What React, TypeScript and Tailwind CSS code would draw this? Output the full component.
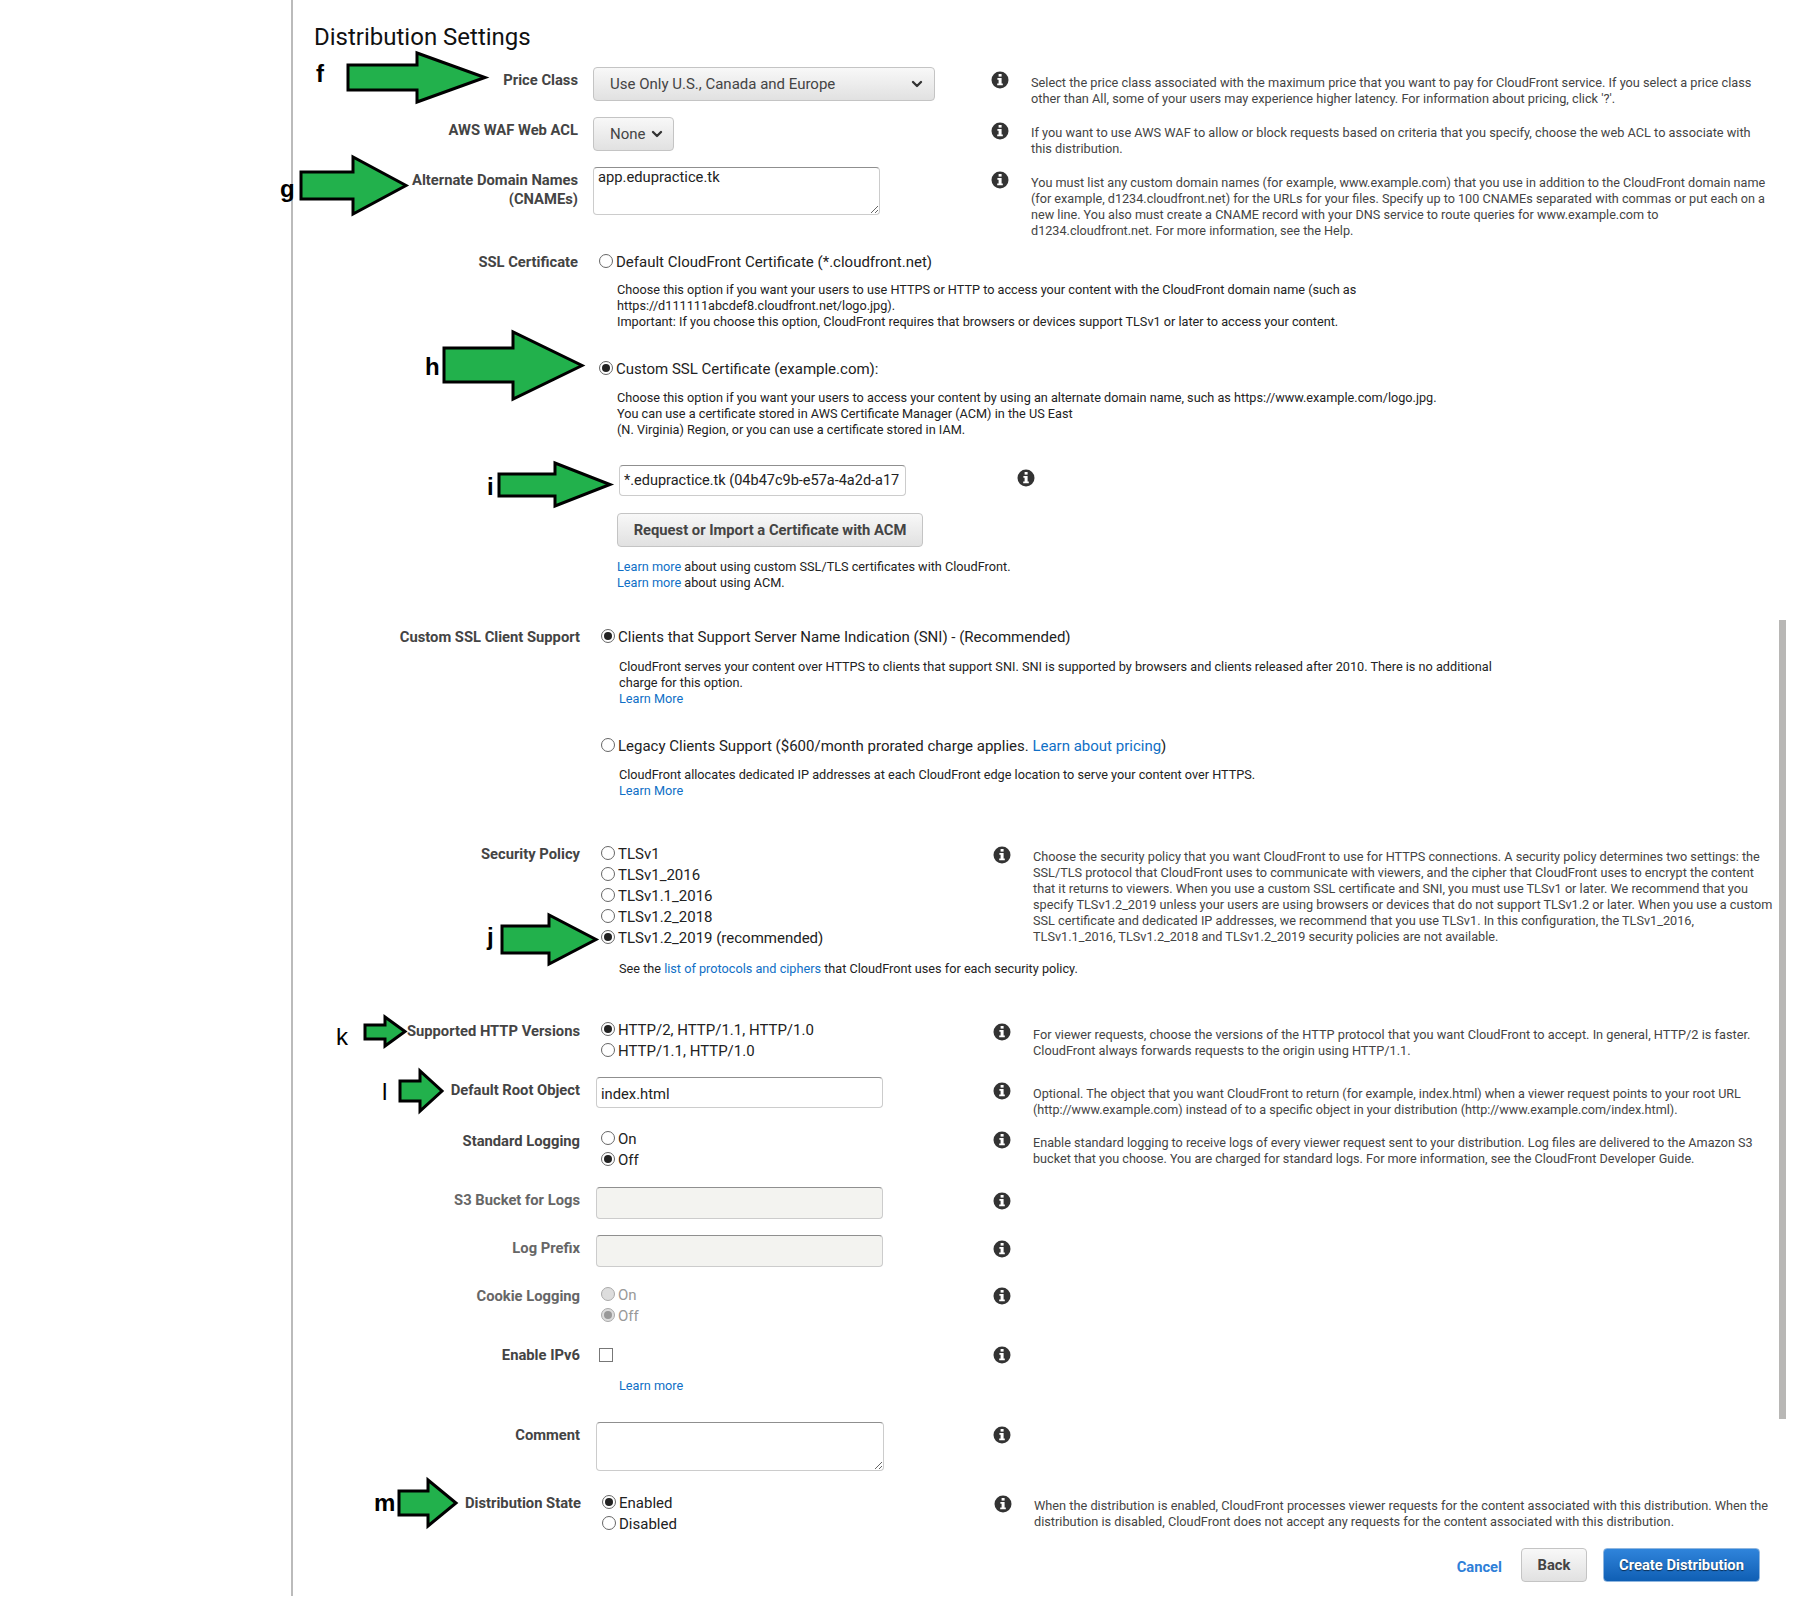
import type { ReactNode } from 'react';
import { ChevronDown } from 'lucide-react';

const FONT = "font-['Roboto','Liberation_Sans',sans-serif]";

// Annotation arrows: tail left, shaft top/bottom, head base x, head top/bottom, tip
const ARROWS = [
  [348, 65, 90, 417, 53, 102, 485],
  [301, 172, 199, 353, 157, 214, 406],
  [444, 348, 382, 513, 332, 399, 582],
  [499, 474, 496, 555, 463, 506, 610],
  [502, 926, 953, 549, 915, 964, 596],
  [365, 1025, 1039, 385, 1017, 1046, 405],
  [400, 1081, 1101, 420, 1071, 1111, 442],
  [399, 1491, 1515, 428, 1480, 1526, 456],
];

function InfoIcon({ className = '' }: { className?: string }) {
  return (
    <svg viewBox="0 0 18 18" className={`h-[18px] w-[18px] ${className}`}>
      <circle cx="9" cy="9" r="8.5" fill="#333" />
      <rect x="7.6" y="3" width="3" height="2.6" fill="#fff" />
      <path d="M6.4 7h4.2v5.4h1.2v1.8H6.2v-1.8h1.4V8.8H6.4z" fill="#fff" />
    </svg>
  );
}

function Radio({ checked = false, disabled = false }: { checked?: boolean; disabled?: boolean }) {
  return (
    <span
      className={`mt-[-3px] mr-[3px] flex h-[14px] w-[14px] shrink-0 items-center justify-center rounded-full border ${
        disabled ? 'border-[#aaa] bg-[#ddd]' : 'border-[#666] bg-white'
      }`}
    >
      {checked && (
        <span className={`h-[8px] w-[8px] rounded-full ${disabled ? 'bg-[#999]' : 'bg-[#222]'}`} />
      )}
    </span>
  );
}

function RadioLine({
  children,
  checked,
  disabled,
}: {
  children: ReactNode;
  checked?: boolean;
  disabled?: boolean;
}) {
  return (
    <label
      className={`flex h-[21px] items-center pt-[3px] pl-[6px] text-[15px] ${disabled ? 'text-[#999]' : 'text-[#222]'}`}
    >
      <Radio checked={checked} disabled={disabled} />
      <span className="mt-px">{children}</span>
    </label>
  );
}

function LearnMore({ children = 'Learn more' }: { children?: ReactNode }) {
  return (
    <a href="#" className="text-[#0f6fc6]">
      {children}
    </a>
  );
}

function Note({ className = '', children }: { className?: string; children: ReactNode }) {
  return <p className={`ml-[24px] text-[12.7px] leading-[16px] text-[#222] ${className}`}>{children}</p>;
}

interface RowProps {
  label: ReactNode;
  muted?: boolean;
  className: string;
  labelClass?: string;
  infoClass?: string;
  helpClass?: string;
  help?: ReactNode;
  wide?: boolean;
  children: ReactNode;
}

function Row({ label, muted, className, labelClass = '', infoClass, helpClass = '', help, wide, children }: RowProps) {
  return (
    <div
      className={`grid ${wide ? 'grid-cols-[285px_1fr]' : 'grid-cols-[285px_413px_40px_1fr]'} ${className}`}
    >
      <div
        className={`text-right text-[14.75px] leading-[19px] font-bold whitespace-nowrap ${muted ? 'text-[#666]' : 'text-[#444]'} ${labelClass}`}
      >
        {label}
      </div>
      <div className="pl-[15px]">{children}</div>
      {!wide && (
        <div className={infoClass}>
          <InfoIcon />
        </div>
      )}
      {!wide && <div className={`text-[12.75px] leading-[16px] whitespace-nowrap text-[#444] ${helpClass}`}>{help}</div>}
    </div>
  );
}

const inputClass =
  'block rounded-[4px] border border-[#ccc] border-t-[#8f8f8f] bg-white px-[4px] text-[14.75px] text-[#222] outline-none';

const greyButton =
  'rounded-[4px] border border-[#c4c4c4] bg-gradient-to-b from-[#f8f8f8] to-[#e1e1e1] text-[#444]';

export default function App() {
  return (
    <div className={`relative h-[1608px] w-[1800px] overflow-hidden bg-white ${FONT}`}>
      <div className="ml-[291px] h-[1596px] border-l-2 border-[#bbb]">
        <h1 className="h-[67px] pt-[23px] pl-[21px] text-[24px] leading-[28px] font-normal text-[#111]">
          Distribution Settings
        </h1>

        <Row
          label="Price Class"
          className="h-[50px]"
          labelClass="pt-[4px]"
          infoClass="pt-[4px]"
          helpClass="pt-[8px]"
          help={
            <>
              Select the price class associated with the maximum price that you want to pay for CloudFront service. If you select a price class
              <br />
              other than All, some of your users may experience higher latency. For information about pricing, click &apos;?&apos;.
            </>
          }
        >
          <button className={`flex h-[34px] w-[342px] items-center justify-between pr-[9px] pl-[16px] text-[15px] ${greyButton}`}>
            Use Only U.S., Canada and Europe
            <ChevronDown className="h-[16px] w-[16px]" strokeWidth={3.5} color="#333" />
          </button>
        </Row>

        <Row
          label="AWS WAF Web ACL"
          className="h-[50px]"
          labelClass="pt-[4px]"
          infoClass="pt-[5px]"
          helpClass="pt-[8px]"
          help={
            <>
              If you want to use AWS WAF to allow or block requests based on criteria that you specify, choose the web ACL to associate with
              <br />
              this distribution.
            </>
          }
        >
          <button className={`flex h-[34px] w-[81px] items-center gap-[3px] pl-[16px] text-[15px] ${greyButton}`}>
            None
            <ChevronDown className="h-[16px] w-[16px]" strokeWidth={3.5} color="#333" />
          </button>
        </Row>

        <Row
          label={
            <>
              Alternate Domain Names
              <br />
              (CNAMEs)
            </>
          }
          className="h-[83px]"
          labelClass="pt-[4px]"
          infoClass="pt-[4px]"
          helpClass="pt-[8px] !text-[12.65px]"
          help={
            <>
              You must list any custom domain names (for example, www.example.com) that you use in addition to the CloudFront domain name
              <br />
              (for example, d1234.cloudfront.net) for the URLs for your files. Specify up to 100 CNAMEs separated with commas or put each on a
              <br />
              new line. You also must create a CNAME record with your DNS service to route queries for www.example.com to
              <br />
              d1234.cloudfront.net. For more information, see the Help.
            </>
          }
        >
          <textarea readOnly defaultValue="app.edupractice.tk" className={`${inputClass} h-[48px] w-[287px] leading-[18px]`} />
        </Row>

        <Row wide label="SSL Certificate" className="h-[375px]" labelClass="pt-[3px]">
          <RadioLine>Default CloudFront Certificate (*.cloudfront.net)</RadioLine>
          <Note className="mt-[11px]">
            Choose this option if you want your users to use HTTPS or HTTP to access your content with the CloudFront domain name (such as
            <br />
            https://d111111abcdef8.cloudfront.net/logo.jpg).
            <br />
            Important: If you choose this option, CloudFront requires that browsers or devices support TLSv1 or later to access your content.
          </Note>
          <div className="mt-[27px]">
            <RadioLine checked>Custom SSL Certificate (example.com):</RadioLine>
          </div>
          <Note className="mt-[12px]">
            Choose this option if you want your users to access your content by using an alternate domain name, such as https://www.example.com/logo.jpg.
            <br />
            You can use a certificate stored in AWS Certificate Manager (ACM) in the US East
            <br />
            (N. Virginia) Region, or you can use a certificate stored in IAM.
          </Note>
          <div className="mt-[27px] ml-[26px] flex gap-[111px]">
            <input readOnly value="*.edupractice.tk (04b47c9b-e57a-4a2d-a17" className={`${inputClass} h-[31px] w-[287px] !text-[14.5px]`} />
            <InfoIcon className="mt-[4px]" />
          </div>
          <button className={`mt-[17px] ml-[24px] block h-[34px] w-[306px] text-[14.75px] font-bold ${greyButton}`}>
            Request or Import a Certificate with ACM
          </button>
          <Note className="mt-[12px]">
            <LearnMore /> about using custom SSL/TLS certificates with CloudFront.
            <br />
            <LearnMore /> about using ACM.
          </Note>
        </Row>

        <div className="pl-[2px]">
          <Row wide label="Custom SSL Client Support" className="h-[217px]" labelClass="pt-[3px]">
            <RadioLine checked>Clients that Support Server Name Indication (SNI) - (Recommended)</RadioLine>
            <Note className="mt-[13px]">
              CloudFront serves your content over HTTPS to clients that support SNI. SNI is supported by browsers and clients released after 2010. There is no additional
              <br />
              charge for this option.
              <br />
              <LearnMore>Learn More</LearnMore>
            </Note>
            <div className="mt-[27px]">
              <RadioLine>
                Legacy Clients Support ($600/month prorated charge applies. <LearnMore>Learn about pricing</LearnMore>)
              </RadioLine>
            </div>
            <Note className="mt-[12px]">
              CloudFront allocates dedicated IP addresses at each CloudFront edge location to serve your content over HTTPS.
              <br />
              <LearnMore>Learn More</LearnMore>
            </Note>
          </Row>

          <Row
            label="Security Policy"
            className="h-[176px]"
            labelClass="pt-[3px]"
            infoClass="pt-[4px]"
            helpClass="pt-[7px] !text-[12.7px]"
            help={
              <>
                Choose the security policy that you want CloudFront to use for HTTPS connections. A security policy determines two settings: the
                <br />
                SSL/TLS protocol that CloudFront uses to communicate with viewers, and the cipher that CloudFront uses to encrypt the content
                <br />
                that it returns to viewers. When you use a custom SSL certificate and SNI, you must use TLSv1 or later. We recommend that you
                <br />
                specify TLSv1.2_2019 unless your users are using browsers or devices that do not support TLSv1.2 or later. When you use a custom
                <br />
                SSL certificate and dedicated IP addresses, we recommend that you use TLSv1. In this configuration, the TLSv1_2016,
                <br />
                TLSv1.1_2016, TLSv1.2_2018 and TLSv1.2_2019 security policies are not available.
              </>
            }
          >
            <RadioLine>TLSv1</RadioLine>
            <RadioLine>TLSv1_2016</RadioLine>
            <RadioLine>TLSv1.1_2016</RadioLine>
            <RadioLine>TLSv1.2_2018</RadioLine>
            <RadioLine checked>TLSv1.2_2019 (recommended)</RadioLine>
            <Note className="mt-[14px] whitespace-nowrap">
              See the <LearnMore>list of protocols and ciphers</LearnMore> that CloudFront uses for each security policy.
            </Note>
          </Row>

          <Row
            label="Supported HTTP Versions"
            className="h-[59px]"
            labelClass="pt-[4px]"
            infoClass="pt-[5px]"
            helpClass="pt-[9px]"
            help={
              <>
                For viewer requests, choose the versions of the HTTP protocol that you want CloudFront to accept. In general, HTTP/2 is faster.
                <br />
                CloudFront always forwards requests to the origin using HTTP/1.1.
              </>
            }
          >
            <RadioLine checked>HTTP/2, HTTP/1.1, HTTP/1.0</RadioLine>
            <RadioLine>HTTP/1.1, HTTP/1.0</RadioLine>
          </Row>

          <Row
            label="Default Root Object"
            className="h-[50px]"
            labelClass="pt-[4px]"
            infoClass="pt-[5px]"
            helpClass="pt-[9px] !text-[12.6px]"
            help={
              <>
                Optional. The object that you want CloudFront to return (for example, index.html) when a viewer request points to your root URL
                <br />
                (http://www.example.com) instead of to a specific object in your distribution (http://www.example.com/index.html).
              </>
            }
          >
            <input readOnly value="index.html" className={`${inputClass} ml-px h-[31px] w-[287px] pt-[2px]`} />
          </Row>

          <Row
            label="Standard Logging"
            className="h-[60px]"
            labelClass="pt-[5px]"
            infoClass="pt-[4px]"
            helpClass="pt-[8px] !text-[12.63px]"
            help={
              <>
                Enable standard logging to receive logs of every viewer request sent to your distribution. Log files are delivered to the Amazon S3
                <br />
                bucket that you choose. You are charged for standard logs. For more information, see the CloudFront Developer Guide.
              </>
            }
          >
            <RadioLine>On</RadioLine>
            <RadioLine checked>Off</RadioLine>
          </Row>

          <Row muted label="S3 Bucket for Logs" className="h-[48px]" labelClass="pt-[4px]" infoClass="pt-[5px]">
            <input readOnly disabled className={`${inputClass} ml-px h-[32px] w-[287px] !bg-[#f3f3f0]`} />
          </Row>

          <Row muted label="Log Prefix" className="h-[48px]" labelClass="pt-[4px]" infoClass="pt-[5px]">
            <input readOnly disabled className={`${inputClass} ml-px h-[32px] w-[287px] !bg-[#f3f3f0]`} />
          </Row>

          <Row muted label="Cookie Logging" className="h-[62px]" labelClass="pt-[4px]" infoClass="pt-[4px]">
            <RadioLine disabled>On</RadioLine>
            <RadioLine checked disabled>
              Off
            </RadioLine>
          </Row>

          <Row label="Enable IPv6" className="h-[77px]" labelClass="pt-px" infoClass="pt-px">
            <span className="mt-[3px] ml-[4px] block h-[14px] w-[14px] border border-[#777] bg-white" />
            <Note className="mt-[16px]">
              <LearnMore />
            </Note>
          </Row>

          <Row label="Comment" className="h-[69px]" labelClass="pt-[4px]" infoClass="pt-[4px]">
            <textarea readOnly className={`${inputClass} ml-px h-[49px] w-[288px]`} />
          </Row>

          <Row
            label="Distribution State"
            className="h-[57px] pl-px"
            labelClass="pt-[3px]"
            infoClass="pt-[4px]"
            helpClass="pt-[7px]"
            help={
              <>
                When the distribution is enabled, CloudFront processes viewer requests for the content associated with this distribution. When the
                <br />
                distribution is disabled, CloudFront does not accept any requests for the content associated with this distribution.
              </>
            }
          >
            <RadioLine checked>Enabled</RadioLine>
            <RadioLine>Disabled</RadioLine>
          </Row>
        </div>
      </div>

      {/* Form actions */}
      <div className="absolute top-[1548px] right-[40px] flex items-center text-[14.75px] font-bold">
        <a href="#" className="mt-[4px] mr-[19px] text-[#2f80d8]">
          Cancel
        </a>
        <button className={`mr-[16px] h-[34px] w-[66px] ${greyButton}`}>Back</button>
        <button className="h-[34px] w-[157px] rounded-[4px] border border-[#8fb6df] bg-gradient-to-b from-[#2f84db] to-[#0f5fb4] text-white [text-shadow:0_1px_1px_rgba(0,0,0,0.6)]">
          Create Distribution
        </button>
      </div>

      {/* Scrollbar thumb */}
      <div className="absolute top-[620px] left-[1779px] h-[799px] w-[7px] bg-[#b8b7b5]" />

      {/* Hand-drawn annotations on top of the screenshot */}
      <svg className="pointer-events-none absolute top-0 left-0 h-[1608px] w-[1800px]" viewBox="0 0 1800 1608">
        {ARROWS.map(([x, s1, s2, hx, h1, h2, tip]) => (
          <polygon
            key={`${x}-${s1}`}
            points={`${x},${s1} ${hx},${s1} ${hx},${h1} ${tip},${(h1 + h2) / 2} ${hx},${h2} ${hx},${s2} ${x},${s2}`}
            fill="#22b14c"
            stroke="#000"
            strokeWidth="3"
          />
        ))}
      </svg>
      <div className="font-['Liberation_Sans',sans-serif] text-[24px] leading-[28px] text-black">
        <span className="absolute top-[60px] left-[316px] font-bold">f</span>
        <span className="absolute top-[175px] left-[280px] font-bold">g</span>
        <span className="absolute top-[353px] left-[425px] font-bold">h</span>
        <span className="absolute top-[473px] left-[487px] font-bold">i</span>
        <span className="absolute top-[923px] left-[487px] font-bold">j</span>
        <span className="absolute top-[1023px] left-[336px]">k</span>
        <span className="absolute top-[1078px] left-[382px]">l</span>
        <span className="absolute top-[1489px] left-[374px] font-bold">m</span>
      </div>
    </div>
  );
}
